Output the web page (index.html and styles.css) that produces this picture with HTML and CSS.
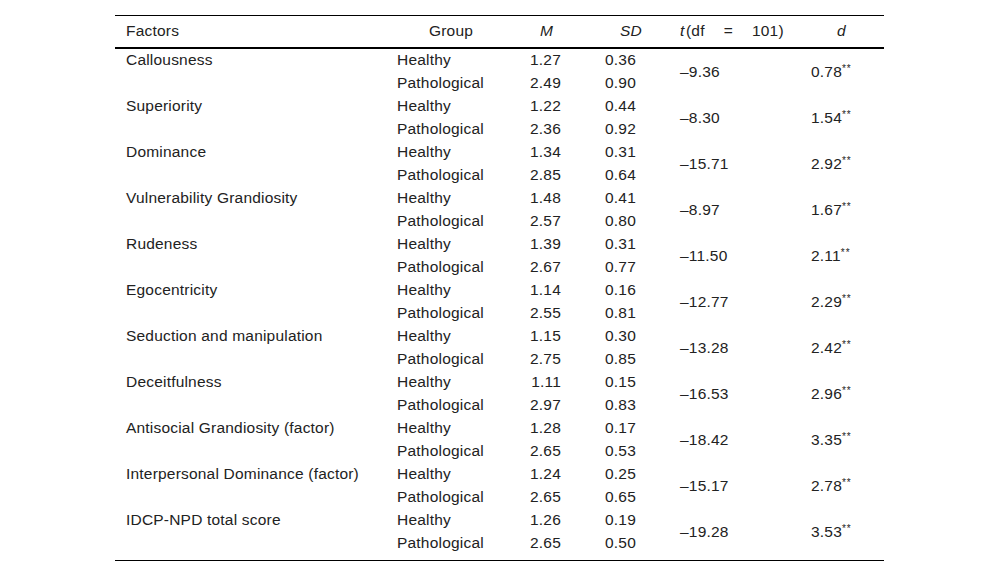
FILE: index.html
```html
<!DOCTYPE html>
<html>
<head>
<meta charset="utf-8">
<link rel="stylesheet" href="styles.css">
</head>
<body>
<div class="wrap">
<table class="stats">
<colgroup>
<col class="c-factor"><col class="c-group"><col class="c-m"><col class="c-sd"><col class="c-t"><col class="c-d">
</colgroup>
<thead>
<tr>
<th class="h-factor">Factors</th>
<th class="h-group">Group</th>
<th class="h-m"><i>M</i></th>
<th class="h-sd"><i>SD</i></th>
<th class="h-t"><i>t</i>&#8202;(df<span class="eq">=</span>101)</th>
<th class="h-d"><i>d</i></th>
</tr>
</thead>
<tbody>
<tr><td class="factor">Callousness</td><td class="group">Healthy</td><td class="m">1.27</td><td class="sd">0.36</td><td class="t" rowspan="2">&#8211;9.36</td><td class="d" rowspan="2">0.78<sup>**</sup></td></tr>
<tr><td class="factor"></td><td class="group">Pathological</td><td class="m">2.49</td><td class="sd">0.90</td></tr>
<tr><td class="factor">Superiority</td><td class="group">Healthy</td><td class="m">1.22</td><td class="sd">0.44</td><td class="t" rowspan="2">&#8211;8.30</td><td class="d" rowspan="2">1.54<sup>**</sup></td></tr>
<tr><td class="factor"></td><td class="group">Pathological</td><td class="m">2.36</td><td class="sd">0.92</td></tr>
<tr><td class="factor">Dominance</td><td class="group">Healthy</td><td class="m">1.34</td><td class="sd">0.31</td><td class="t" rowspan="2">&#8211;15.71</td><td class="d" rowspan="2">2.92<sup>**</sup></td></tr>
<tr><td class="factor"></td><td class="group">Pathological</td><td class="m">2.85</td><td class="sd">0.64</td></tr>
<tr><td class="factor">Vulnerability Grandiosity</td><td class="group">Healthy</td><td class="m">1.48</td><td class="sd">0.41</td><td class="t" rowspan="2">&#8211;8.97</td><td class="d" rowspan="2">1.67<sup>**</sup></td></tr>
<tr><td class="factor"></td><td class="group">Pathological</td><td class="m">2.57</td><td class="sd">0.80</td></tr>
<tr><td class="factor">Rudeness</td><td class="group">Healthy</td><td class="m">1.39</td><td class="sd">0.31</td><td class="t" rowspan="2">&#8211;11.50</td><td class="d" rowspan="2">2.11<sup>**</sup></td></tr>
<tr><td class="factor"></td><td class="group">Pathological</td><td class="m">2.67</td><td class="sd">0.77</td></tr>
<tr><td class="factor">Egocentricity</td><td class="group">Healthy</td><td class="m">1.14</td><td class="sd">0.16</td><td class="t" rowspan="2">&#8211;12.77</td><td class="d" rowspan="2">2.29<sup>**</sup></td></tr>
<tr><td class="factor"></td><td class="group">Pathological</td><td class="m">2.55</td><td class="sd">0.81</td></tr>
<tr><td class="factor">Seduction and manipulation</td><td class="group">Healthy</td><td class="m">1.15</td><td class="sd">0.30</td><td class="t" rowspan="2">&#8211;13.28</td><td class="d" rowspan="2">2.42<sup>**</sup></td></tr>
<tr><td class="factor"></td><td class="group">Pathological</td><td class="m">2.75</td><td class="sd">0.85</td></tr>
<tr><td class="factor">Deceitfulness</td><td class="group">Healthy</td><td class="m">1.11</td><td class="sd">0.15</td><td class="t" rowspan="2">&#8211;16.53</td><td class="d" rowspan="2">2.96<sup>**</sup></td></tr>
<tr><td class="factor"></td><td class="group">Pathological</td><td class="m">2.97</td><td class="sd">0.83</td></tr>
<tr><td class="factor">Antisocial Grandiosity (factor)</td><td class="group">Healthy</td><td class="m">1.28</td><td class="sd">0.17</td><td class="t" rowspan="2">&#8211;18.42</td><td class="d" rowspan="2">3.35<sup>**</sup></td></tr>
<tr><td class="factor"></td><td class="group">Pathological</td><td class="m">2.65</td><td class="sd">0.53</td></tr>
<tr><td class="factor">Interpersonal Dominance (factor)</td><td class="group">Healthy</td><td class="m">1.24</td><td class="sd">0.25</td><td class="t" rowspan="2">&#8211;15.17</td><td class="d" rowspan="2">2.78<sup>**</sup></td></tr>
<tr><td class="factor"></td><td class="group">Pathological</td><td class="m">2.65</td><td class="sd">0.65</td></tr>
<tr><td class="factor">IDCP-NPD total score</td><td class="group">Healthy</td><td class="m">1.26</td><td class="sd">0.19</td><td class="t" rowspan="2">&#8211;19.28</td><td class="d" rowspan="2">3.53<sup>**</sup></td></tr>
<tr><td class="factor"></td><td class="group">Pathological</td><td class="m">2.65</td><td class="sd">0.50</td></tr>
</tbody>
</table>
</div>
</body>
</html>
```
FILE: styles.css
```css
html, body {
  margin: 0;
  padding: 0;
  background: #fff;
}
body {
  font-family: "Liberation Sans", Arial, sans-serif;
  font-size: 15.5px;
  letter-spacing: 0.2px;
  color: #222;
}
.wrap {
  width: 769px;
  margin: 15px 0 0 115px;
  border-top: 1px solid #000;
  border-bottom: 1px solid #000;
  padding-bottom: 5px;
}
.stats {
  width: 769px;
  border-collapse: collapse;
  table-layout: fixed;
}
.c-factor { width: 272px; }
.c-group { width: 128px; }
.c-m { width: 80px; }
.c-sd { width: 75px; }
.c-t { width: 131px; }
.c-d { width: 83px; }

.stats th, .stats td {
  padding: 0;
  font-weight: normal;
  white-space: nowrap;
}
.stats thead th {
  height: 29px;
  padding-bottom: 2px;
  border-bottom: 2px solid #000;
  vertical-align: middle;
  text-align: left;
}
.stats td {
  height: 21px;
  line-height: 21px;
  padding-bottom: 2px;
  vertical-align: middle;
}
.h-factor { padding-left: 11px !important; }
.h-group { text-align: center !important; }
.h-m { text-align: right !important; padding-right: 42px !important; }
.h-sd { padding-left: 25px !important; }
.h-t { padding-left: 10px !important; }
.h-d { padding-left: 36px !important; }
.eq { display: inline-block; margin: 0 19px; }

.factor { padding-left: 11px !important; }
.group { padding-left: 10px !important; }
.m { text-align: right; padding-right: 34px !important; }
.sd { padding-left: 10px !important; }
.t { padding-left: 10px !important; }
.d { padding-left: 10px !important; }
sup {
  font-size: 10px;
  letter-spacing: 1px;
  line-height: 0;
  vertical-align: 5px;
}
```
